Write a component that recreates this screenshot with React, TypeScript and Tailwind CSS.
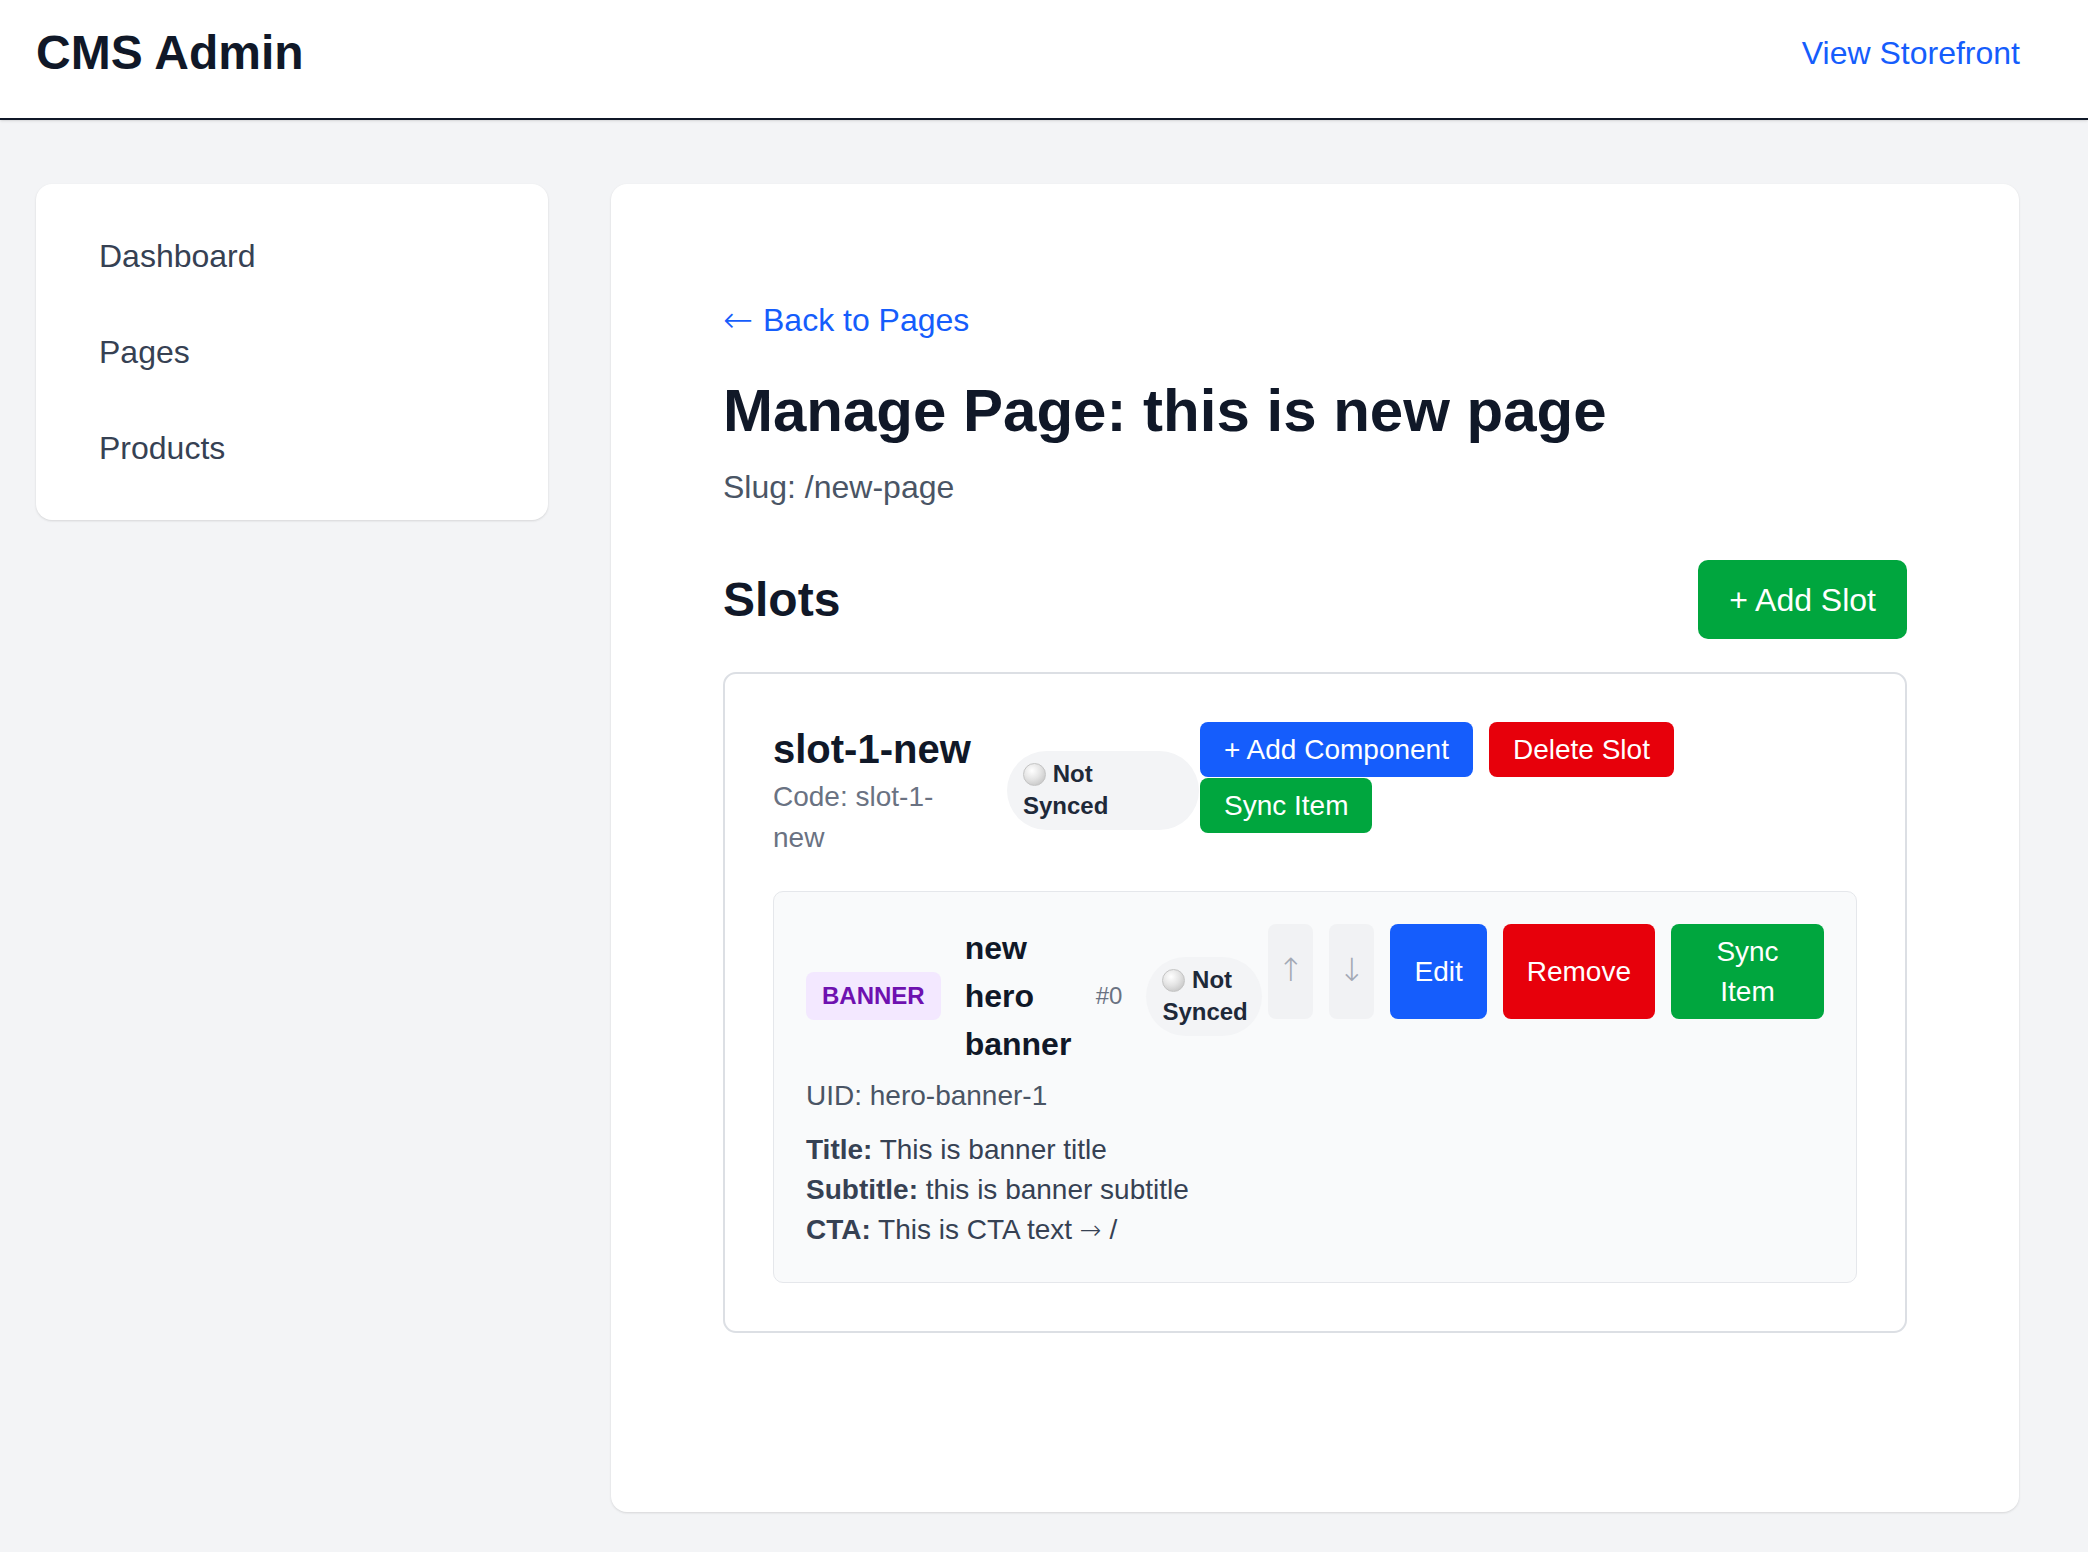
import React from "react";

const navItems = ["Dashboard", "Pages", "Products"];

const bannerFields = [
    { label: "Title:", value: "This is banner title" },
    { label: "Subtitle:", value: "this is banner subtitle" },
    { label: "CTA:", value: "This is CTA text", arrow: true },
];

// thin arrow glyphs read better in DejaVu's light cut than in Liberation
const Arrow = ({ char, className }: { char: string; className: string }) => (
    <span className={`font-['DejaVu_Sans',sans-serif] font-extralight ${className}`}>{char}</span>
);

// grey "not synced" pill with the little ball in front
const SyncBadge = ({ className }: { className: string }) => (
    <div className={`shrink-0 rounded-full bg-gray-100 px-4 py-[7.5px] text-[24px] font-bold leading-[32px] text-gray-800 ${className}`}>
        <span className="inline-block h-[23px] w-[23px] rounded-full border border-[#c4c4c4] bg-[radial-gradient(circle_at_38%_32%,#ffffff_0%,#e4e4e4_45%,#b9b9b9_100%)] align-[-4px]" /> Not
        <br />
        Synced
    </div>
);

const App = () => {
    return (
        <div className="min-h-screen bg-gray-100 pb-[40px] font-['Liberation_Sans',Arial,sans-serif]">
            <header className="flex h-[120px] items-center justify-between border-b-2 border-gray-900 bg-white pb-[12px] pl-[36px] pr-[68px] shadow-sm">
                <h1 className="text-[48px] font-bold leading-[64px] text-gray-900">CMS Admin</h1>
                <a href="#" className="text-[32px] leading-[48px] text-blue-600">
                    View Storefront
                </a>
            </header>

            <div className="flex gap-[63px] pl-[36px] pr-[69px] pt-[64px]">
                <aside className="h-[336px] w-[512px] shrink-0 rounded-[16px] bg-white py-6 shadow-[0_1px_3px_rgba(0,0,0,0.08),0_1px_2px_rgba(0,0,0,0.05)]">
                    {navItems.map((item) => (
                        <a key={item} href="#" className="block px-[63px] py-6 text-[32px] leading-[48px] text-gray-700">
                            {item}
                        </a>
                    ))}
                </aside>

                <main className="h-[1328px] flex-1 rounded-[16px] bg-white p-[112px] shadow-[0_1px_3px_rgba(0,0,0,0.08),0_1px_2px_rgba(0,0,0,0.05)]">
                    <a href="#" className="mb-[31px] flex items-center gap-[9px] text-[32px] leading-[48px] text-blue-600">
                        <Arrow char="←" className="inline-block w-[31px] text-[36px] leading-[48px]" />
                        <span>Back to Pages</span>
                    </a>
                    <h2 className="mb-4 text-[60px] font-bold leading-[72px] text-gray-900">Manage Page: this is new page</h2>
                    <p className="text-[32px] leading-[48px] text-gray-600">Slug: /new-page</p>

                    <div className="mb-[33px] mt-[49px] flex items-center justify-between">
                        <h3 className="text-[48px] font-bold leading-[64px] text-gray-900">Slots</h3>
                        <button className="rounded-[10px] bg-green-600 px-[31px] py-[15.5px] text-[32px] leading-[48px] text-white">
                            + Add Slot
                        </button>
                    </div>

                    <div className="rounded-[13px] border-2 border-[#dcdfe4] p-12">
                        <div className="flex items-start">
                            <div className="flex items-center">
                                <div className="w-[198px] shrink-0">
                                    <h4 className="text-[40px] font-bold leading-[54px] text-gray-900">slot-1-new</h4>
                                    <p className="text-[28px] leading-[41px] text-gray-500">Code: slot-1-new</p>
                                </div>
                                <SyncBadge className="ml-[36px] w-[192px]" />
                            </div>
                            <div className="ml-px flex min-w-0 flex-1 flex-wrap gap-x-4 gap-y-px">
                                <button className="rounded-[8px] bg-blue-600 px-6 py-[7.5px] text-[28px] leading-[40px] text-white">
                                    + Add Component
                                </button>
                                <button className="rounded-[8px] bg-red-600 px-6 py-[7.5px] text-[28px] leading-[40px] text-white">
                                    Delete Slot
                                </button>
                                <button className="rounded-[8px] bg-green-600 px-6 py-[7.5px] text-[28px] leading-[40px] text-white">
                                    Sync Item
                                </button>
                            </div>
                        </div>

                        <div className="mt-[33px] rounded-[10px] border border-gray-200 bg-gray-50 p-8">
                            <div className="flex items-start justify-between">
                                <div className="flex items-center gap-6">
                                    <span className="rounded-[8px] bg-purple-100 px-4 py-2 text-[24px] font-bold leading-[32px] text-purple-800">
                                        BANNER
                                    </span>
                                    <h5 className="w-[107px] shrink-0 text-[32px] font-bold leading-[48px] text-gray-900">new hero banner</h5>
                                    <span className="text-[24px] leading-[32px] text-gray-500">#0</span>
                                    <SyncBadge className="w-[116px]" />
                                </div>
                                <div className="flex gap-4">
                                    <button className="flex w-[45px] items-center justify-center rounded-[8px] bg-[#f1f2f4] pb-1 text-[#a3a9b4]">
                                        <Arrow char="↑" className="text-[32px] leading-[40px]" />
                                    </button>
                                    <button className="flex w-[45px] items-center justify-center rounded-[8px] bg-[#f1f2f4] pb-1 text-[#a3a9b4]">
                                        <Arrow char="↓" className="text-[32px] leading-[40px]" />
                                    </button>
                                    <button className="rounded-[8px] bg-blue-600 px-6 py-[7.5px] text-[28px] leading-[40px] text-white">
                                        Edit
                                    </button>
                                    <button className="rounded-[8px] bg-red-600 px-6 py-[7.5px] text-[28px] leading-[40px] text-white">
                                        Remove
                                    </button>
                                    <button className="w-[153px] rounded-[8px] bg-green-600 px-6 py-[7.5px] text-[28px] leading-[40px] text-white">
                                        Sync Item
                                    </button>
                                </div>
                            </div>

                            <p className="mt-2 text-[28px] leading-[40px] text-gray-600">UID: hero-banner-1</p>
                            <div className="mt-[14px] text-[28px] leading-[40px] text-gray-700">
                                {bannerFields.map((field) => (
                                    <p key={field.label}>
                                        <span className="font-bold">{field.label}</span> {field.value}
                                        {field.arrow && (
                                            <>
                                                {" "}
                                                <Arrow char="→" className="text-[26px]" /> /
                                            </>
                                        )}
                                    </p>
                                ))}
                            </div>
                        </div>
                    </div>
                </main>
            </div>
        </div>
    );
};

export default App;
